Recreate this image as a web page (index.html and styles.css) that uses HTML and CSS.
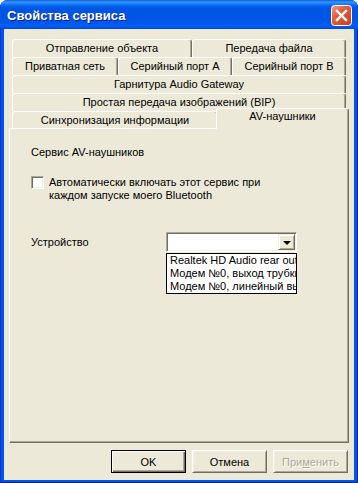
FILE: index.html
```html
<!DOCTYPE html>
<html lang="ru">
<head>
    <meta charset="UTF-8">
    <title>Свойства сервиса</title>
    <link rel="stylesheet" href="styles.css">
</head>
<body>
    <div class="window">
        <div class="titlebar">
            <span class="title">Свойства сервиса</span>
            <button class="close-btn" aria-label="Закрыть">
                <svg width="21" height="21" viewBox="0 0 21 21">
                    <defs>
                        <linearGradient id="cb" x1="0" y1="0" x2="1" y2="1">
                            <stop offset="0" stop-color="#f0a08a"/>
                            <stop offset="0.35" stop-color="#e5603f"/>
                            <stop offset="1" stop-color="#c2401f"/>
                        </linearGradient>
                    </defs>
                    <rect x="0.5" y="0.5" width="20" height="20" rx="3" fill="url(#cb)" stroke="#fff"/>
                    <path d="M6 6 L15 15 M15 6 L6 15" stroke="#fff" stroke-width="2.4" stroke-linecap="square"/>
                </svg>
            </button>
        </div>
        <div class="client">
            <div class="tabs">
                <div class="tab-row">
                    <div class="tab w180">Отправление объекта</div>
                    <div class="tab grow">Передача файла</div>
                </div>
                <div class="tab-row">
                    <div class="tab w106">Приватная сеть</div>
                    <div class="tab w114">Серийный порт A</div>
                    <div class="tab grow">Серийный порт B</div>
                </div>
                <div class="tab-row">
                    <div class="tab grow">Гарнитура Audio Gateway</div>
                </div>
                <div class="tab-row">
                    <div class="tab grow">Простая передача изображений (BIP)</div>
                </div>
                <div class="tab-row front">
                    <div class="tab w206">Синхронизация информации</div>
                    <div class="tab active grow">AV-наушники</div>
                </div>
            </div>

            <div class="panel">
                <div class="service-name">Сервис AV-наушников</div>
                <div class="check-row">
                    <span class="checkbox"></span>
                    <span class="check-label">Автоматически включать этот сервис при<br>каждом запуске моего Bluetooth</span>
                </div>
                <div class="device-row">
                    <span class="device-label">Устройство</span>
                    <div class="combo-wrap">
                        <div class="combo">
                            <span class="combo-btn"><span class="arrow"></span></span>
                        </div>
                        <ul class="dropdown-list">
                            <li>Realtek HD Audio rear output</li>
                            <li>Модем №0, выход трубки</li>
                            <li>Модем №0, линейный выход</li>
                        </ul>
                    </div>
                </div>
            </div>

            <div class="buttons">
                <button class="btn default">OK</button>
                <button class="btn">Отмена</button>
                <button class="btn disabled">При<u>м</u>енить</button>
            </div>
        </div>
    </div>
</body>
</html>
```

FILE: styles.css
```css
body {
    margin: 0;
    background: #fff;
    font-family: "Liberation Sans", Arial, sans-serif;
    font-size: 11px;
    color: #000;
}
.window {
    width: 358px;
    height: 483px;
    box-sizing: border-box;
    display: flex;
    flex-direction: column;
    background: #0055e6;
    border-radius: 8px 8px 0 0;
    box-shadow: inset 1px 0 #0831d9, inset -1px 0 #001ea0, inset 0 -1px #001ea0;
}
.titlebar {
    height: 29px;
    flex-shrink: 0;
    box-sizing: border-box;
    display: flex;
    align-items: center;
    justify-content: space-between;
    padding: 2px 6px 0 7px;
    border-radius: 8px 8px 0 0;
    background: linear-gradient(to bottom, #0a5fd8 0px, #3b92ff 2px, #1480ff 4px, #0262ee 6px, #0054e3 9px, #0054e3 18px, #0058ec 23px, #0060f8 26px, #0046d8 29px);
}
.title {
    color: #fff;
    font-weight: 700;
    font-size: 13px;
    text-shadow: 1px 1px #0a1e8c;
}
.close-btn {
    width: 21px;
    height: 21px;
    padding: 0;
    border: none;
    background: none;
    margin-top: -1px;
}
.close-btn svg {
    display: block;
}
.client {
    flex: 1;
    margin: 0 4px 3px;
    padding: 10px 5px 0;
    background: #ece9d8;
    display: flex;
    flex-direction: column;
}

/* tabs */
.tabs {
    margin: 0 3px;
}
.tab-row {
    display: flex;
    height: 18px;
}
.tab {
    box-sizing: border-box;
    height: 18px;
    line-height: 17px;
    text-align: center;
    white-space: nowrap;
    border-top: 1px solid #fff;
    border-left: 1px solid #fff;
    border-right: 1px solid #716f64;
    box-shadow: inset -1px 0 #aca899;
    border-radius: 3px 3px 0 0;
    background: #ece9d8;
}
.tab.grow { flex: 1; }
.w180 { width: 180px; }
.w106 { width: 106px; }
.w114 { width: 114px; }
.w206 { width: 206px; }
.tab-row.front {
    height: 17px;
    align-items: flex-end;
}
.tab-row.front .tab {
    height: 17px;
    line-height: 16px;
}
.tab-row.front .tab.active {
    height: 21px;
    line-height: 15px;
    margin: -3px -3px -1px -2px;
    position: relative;
    z-index: 1;
}

/* panel */
.panel {
    height: 315px;
    box-sizing: border-box;
    border: 1px solid;
    border-color: #fff #716f64 #716f64 #fff;
    box-shadow: inset -1px -1px #aca899;
    padding: 17px 0 0 21px;
}
.service-name {
    line-height: 13px;
}
.check-row {
    display: flex;
    gap: 5px;
    margin-top: 17px;
}
.checkbox {
    width: 13px;
    height: 13px;
    box-sizing: border-box;
    flex-shrink: 0;
    background: #fff;
    border: 1px solid;
    border-color: #aca899 #fff #fff #aca899;
    box-shadow: inset 1px 1px #716f64, inset -1px -1px #f1efe2;
}
.check-label {
    line-height: 13px;
}
.device-row {
    display: flex;
    align-items: center;
    margin-top: 30px;
}
.device-label {
    width: 135px;
}
.combo-wrap {
    position: relative;
}
.combo {
    width: 131px;
    height: 20px;
    box-sizing: border-box;
    background: #fff;
    border: 1px solid;
    border-color: #aca899 #fff #fff #aca899;
    box-shadow: inset 1px 1px #716f64, inset -1px -1px #f1efe2;
    padding: 1px;
    display: flex;
    justify-content: flex-end;
}
.combo-btn {
    width: 17px;
    height: 16px;
    box-sizing: border-box;
    background: #ece9d8;
    border: 1px solid;
    border-color: #f1efe2 #716f64 #716f64 #f1efe2;
    box-shadow: inset 1px 1px #fff, inset -1px -1px #aca899;
    display: flex;
    align-items: center;
    justify-content: center;
}
.arrow {
    width: 0;
    height: 0;
    border-left: 4px solid transparent;
    border-right: 4px solid transparent;
    border-top: 4px solid #000;
    margin-top: 1px;
}
.dropdown-list {
    position: absolute;
    top: 21px;
    left: 0;
    width: 131px;
    box-sizing: border-box;
    margin: 0;
    padding: 0;
    list-style: none;
    background: #fff;
    border: 1px solid #000;
}
.dropdown-list li {
    height: 13px;
    line-height: 13px;
    padding-left: 3px;
    white-space: nowrap;
    overflow: hidden;
}

/* buttons */
.buttons {
    display: flex;
    justify-content: flex-end;
    gap: 6px;
    margin-top: 7px;
    padding-right: 1px;
}
.btn {
    width: 75px;
    height: 23px;
    box-sizing: border-box;
    padding: 0;
    font-family: inherit;
    font-size: 11px;
    color: #000;
    background: #ece9d8;
    border: 1px solid;
    border-color: #fff #716f64 #716f64 #fff;
    box-shadow: inset 1px 1px #f1efe2, inset -1px -1px #aca899;
}
.btn.default {
    border-color: #000;
    box-shadow: inset 1px 1px #fff, inset -1px -1px #716f64, inset -2px -2px #aca899;
}
.btn.disabled {
    color: #aca899;
    text-shadow: 1px 1px #fff;
}
```
